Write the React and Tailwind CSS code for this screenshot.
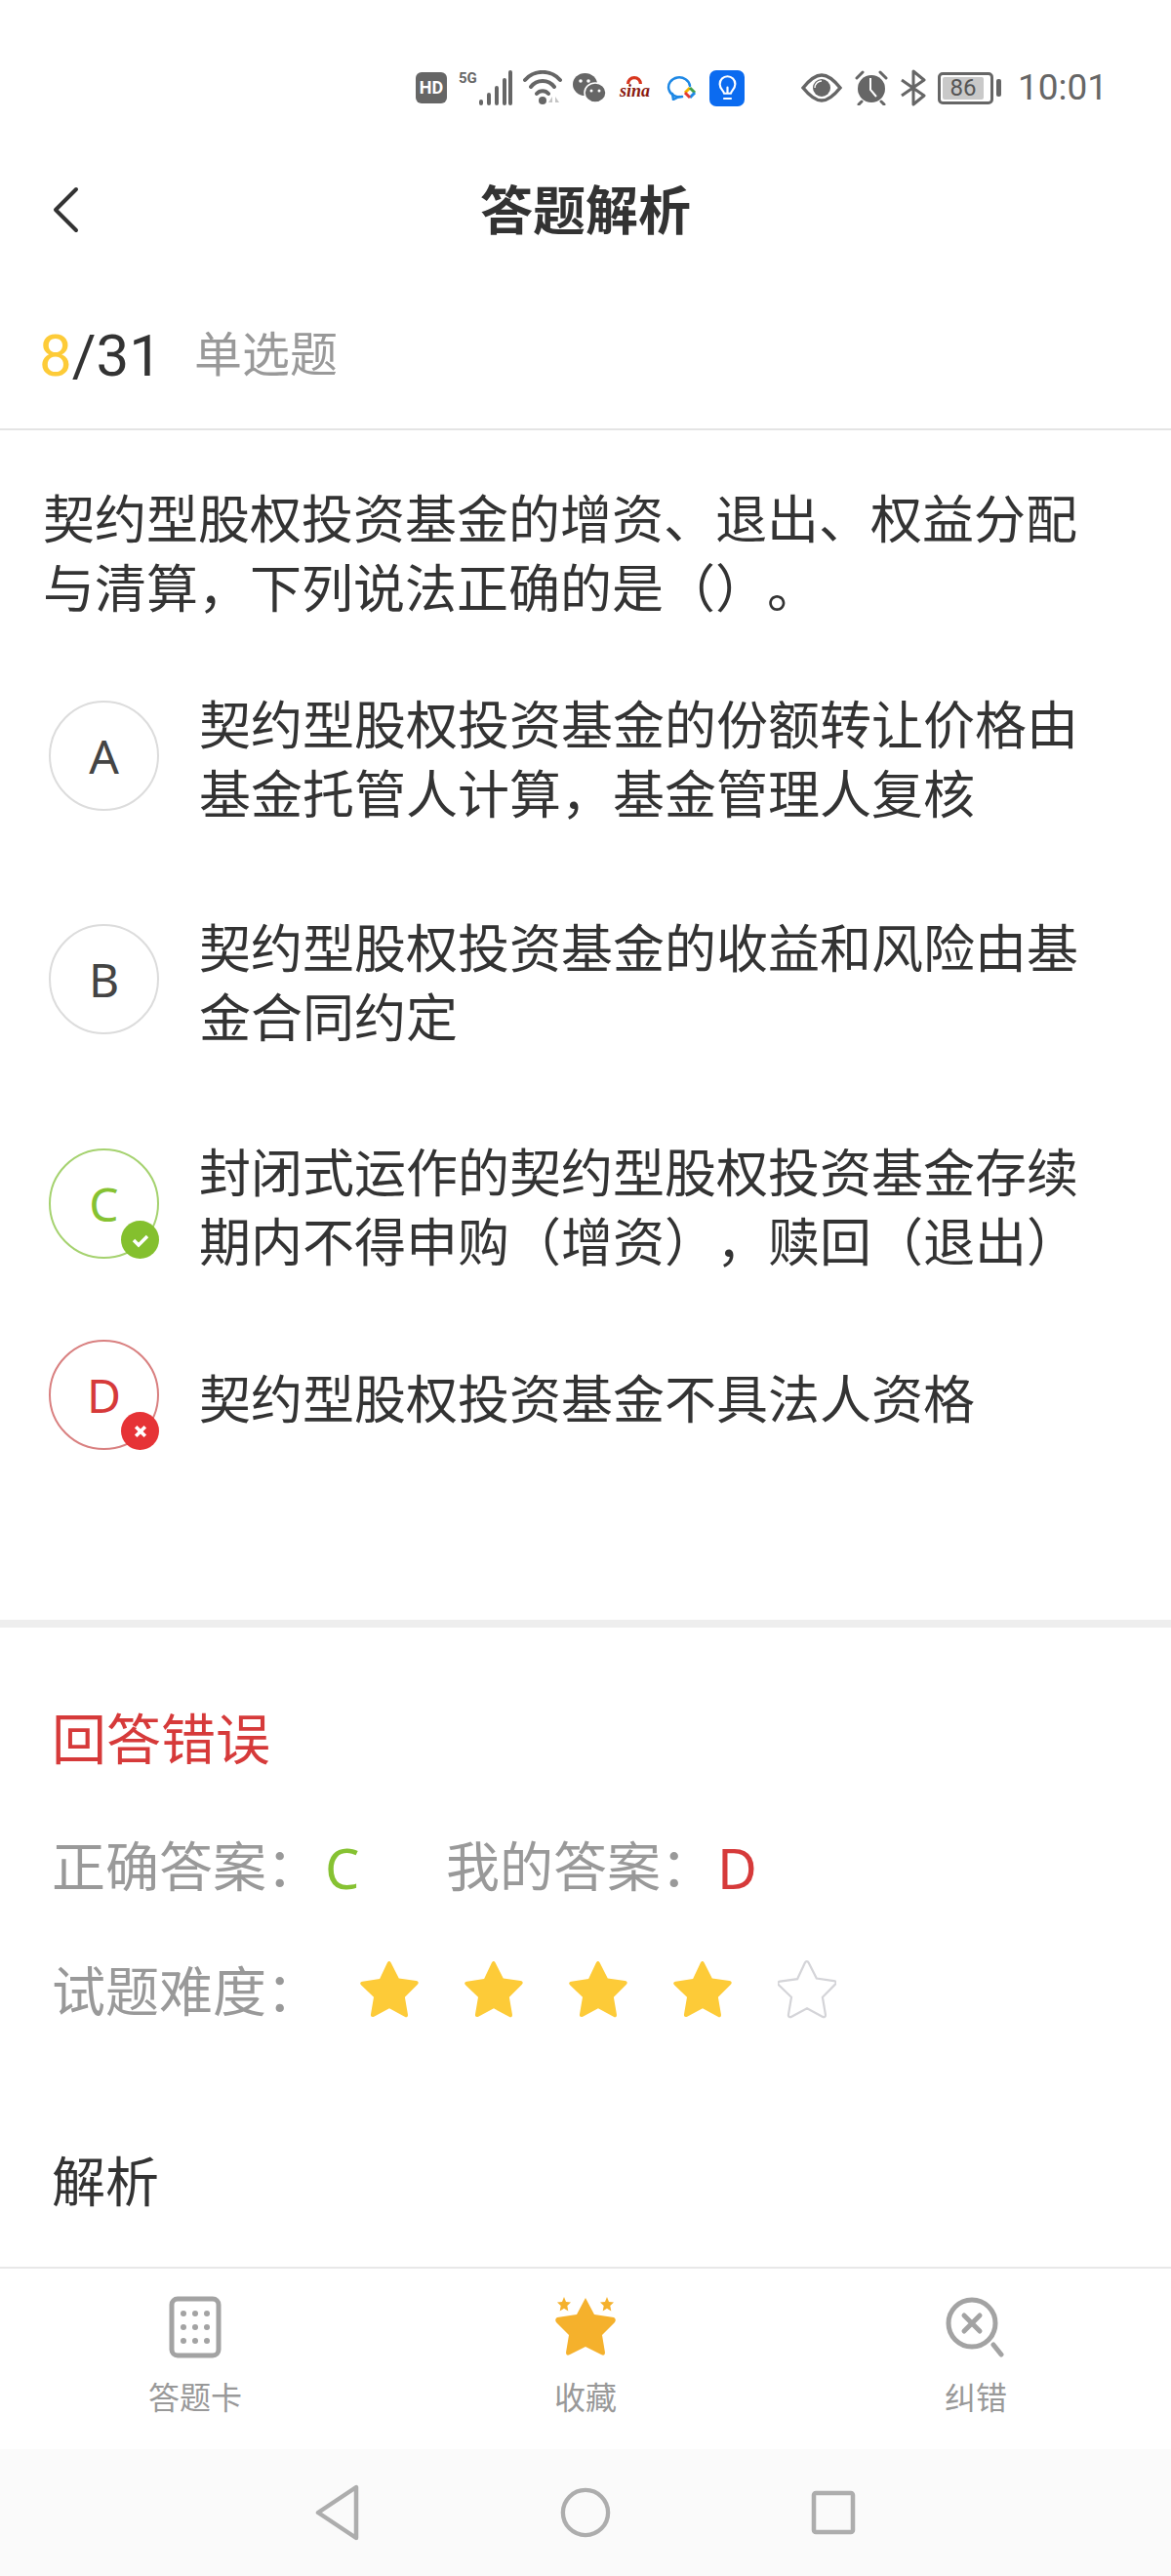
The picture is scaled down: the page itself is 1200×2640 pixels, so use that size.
const FONT = "font-['Roboto','Noto_Sans_CJK_SC',sans-serif]";

const options = [
  { key: "A", lines: ["契约型股权投资基金的份额转让价格由", "基金托管人计算，基金管理人复核"], pad: "pt-[56px] pb-[74px]" },
  { key: "B", lines: ["契约型股权投资基金的收益和风险由基", "金合同约定"], pad: "pb-[75px]" },
  { key: "C", lines: ["封闭式运作的契约型股权投资基金存续", "期内不得申购（增资），赎回（退出）"], state: "ok", pad: "pb-[62px]" },
  { key: "D", lines: ["契约型股权投资基金不具法人资格"], state: "bad", pad: "" },
];

function Star({ filled }) {
  const d = "M28 3.500c1-2 2.600-2 3.600 0l7.200 14.200 15.900 2.300c2.200.3 2.700 1.900 1.100 3.400L44.300 35l2.700 15.800c.4 2.200-1 3.200-2.900 2.100L30 45.400l-14.200 7.500c-1.900 1-3.300 0-2.900-2.100L15.600 35 4.100 23.900c-1.600-1.500-1.100-3.100 1.100-3.400l15.900-2.300z";
  return (
    <svg viewBox="3 1 54 54" className="w-[60px] h-[60px]">
      <path d={d} fill={filled ? "#fdcb38" : "#fff"} stroke={filled ? "none" : "#d4d4d8"} strokeWidth="2" />
    </svg>
  );
}

function StatusBar() {
  return (
    <div className="h-[154px] pt-[71px] pl-[426px]">
      <div className="flex items-center h-[38px] text-[#666]">
        <div className="w-[32px] h-[32px] rounded-[6px] bg-[#666] text-white text-[18px] font-bold leading-[32px] text-center">HD</div>
        <svg viewBox="0 0 55 36" className="w-[55px] h-[36px] ml-[12px]">
          <text x="0" y="13" fontSize="15" fontWeight="700" fill="#666">5G</text>
          <g fill="none" stroke="#666" strokeWidth="4" strokeLinecap="round">
            <path d="M23 32v2M31 25v9M39 18v16M47 10v24M53 2v32" />
          </g>
        </svg>
        <svg viewBox="0 0 40 36" className="w-[40px] h-[36px] ml-[11px]">
          <g fill="none" stroke="#666" strokeWidth="4" strokeLinecap="round">
            <path d="M2 10a24 24 0 0 1 36 0M8 17a15 15 0 0 1 24 0M14 24a8 8 0 0 1 12 0" />
          </g>
          <circle cx="20" cy="31" r="4" fill="#666" />
          <path d="M30 27l-4 6h4zM33 27l4 6h-4z" fill="#c4c4c4" />
        </svg>
        <svg viewBox="0 0 34 30" className="w-[34px] h-[30px] ml-[11px]">
          <ellipse cx="12.500" cy="11.500" rx="12.500" ry="11.500" fill="#666" />
          <ellipse cx="23" cy="20" rx="11" ry="10" fill="#666" stroke="#fff" strokeWidth="1.500" />
          <circle cx="8" cy="8" r="1.800" fill="#fff" />
          <circle cx="16" cy="8" r="1.800" fill="#fff" />
          <circle cx="19" cy="18" r="1.500" fill="#fff" />
          <circle cx="27" cy="18" r="1.500" fill="#fff" />
        </svg>
        <div className="relative w-[32px] h-[24px] ml-[14px]">
          <svg viewBox="0 0 20 12" className="absolute left-[7px] top-[-1px] w-[16px] h-[10px]">
            <path d="M2 11a8 8 0 0 1 16 0" fill="none" stroke="#d8361e" strokeWidth="4" />
          </svg>
          <span className="absolute left-0 top-[5px] text-[18px] leading-[20px] italic font-bold text-[#8a1a10] font-['Liberation_Serif',serif]">sina</span>
        </div>
        <svg viewBox="0 0 32 26" className="w-[32px] h-[26px] ml-[16px]">
          <path d="M16 22a11 10 0 1 1 8-11" fill="none" stroke="#1e88e5" strokeWidth="2.500" strokeLinecap="round" />
          <path d="M6 19l1 6 6-3" fill="none" stroke="#1e88e5" strokeWidth="2.500" strokeLinecap="round" />
          <path d="M19 18l5-5" stroke="#f4b400" strokeWidth="3" />
          <path d="M24 13l5 5" stroke="#43a047" strokeWidth="3" />
          <path d="M29 18l-5 5" stroke="#1e88e5" strokeWidth="3" />
          <path d="M24 23l-5-5" stroke="#e53935" strokeWidth="3" />
        </svg>
        <div className="w-[36px] h-[37px] ml-[12px] rounded-[7px] bg-[#0b6bf0] flex items-center justify-center">
          <svg viewBox="0 0 24 30" className="w-[21px] h-[27px]" fill="none" stroke="#fff" strokeWidth="2.500" strokeLinecap="round" strokeLinejoin="round">
            <path d="M8 21c0-3-5-5-5-11a9 9 0 0 1 18 0c0 6-5 8-5 11zM8 27h8M12 21v-7" />
          </svg>
        </div>
        <svg viewBox="0 0 42 30" className="w-[42px] h-[30px] ml-[58px]">
          <path d="M2 15C10 5 16 2 21 2s11 3 19 13c-8 10-14 13-19 13S10 25 2 15z" fill="none" stroke="#666" strokeWidth="3.500" />
          <circle cx="21" cy="15" r="9" fill="#666" />
          <path d="M14 15a7 7 0 0 1 7-7" fill="none" stroke="#fff" strokeWidth="1.500" />
        </svg>
        <svg viewBox="0 0 36 36" className="w-[36px] h-[36px] ml-[12px]">
          <circle cx="18" cy="19" r="14" fill="#666" />
          <path d="M17 8v12l6 7" fill="none" stroke="#fff" strokeWidth="2" />
          <path d="M3 8l6-6M33 8l-6-6M8 32l-3 3M28 32l3 3" stroke="#666" strokeWidth="3" strokeLinecap="round" />
        </svg>
        <svg viewBox="0 0 27 38" className="w-[27px] h-[38px] ml-[11px]">
          <path d="M2 11l23 16-11 9V2l11 9L2 27" fill="none" stroke="#666" strokeWidth="3" strokeLinejoin="round" />
        </svg>
        <div className="flex items-center ml-[12px]">
          <div className="w-[57px] h-[33px] rounded-[5px] border-[3px] border-[#666] p-[2px]">
            <div className="w-[42px] h-full rounded-[2px] bg-[#c9c9c9] text-[#555] text-[24px] leading-[23px] text-center">86</div>
          </div>
          <div className="w-[5px] h-[18px] ml-[3px] rounded-[2px] bg-[#666]" />
        </div>
        <div className="ml-[17px] text-[37px] leading-[38px] text-[#666]">10:01</div>
      </div>
    </div>
  );
}

function Option({ item }) {
  const color = item.state === "ok" ? "border-[#a5d26f] text-[#86c232]" : item.state === "bad" ? "border-[#d98080] text-[#d63a3a]" : "border-[#dcdcdc] text-[#444]";
  return (
    <div className={`flex items-center ml-[50px] ${item.pad}`}>
      <div className={`relative shrink-0 w-[113px] h-[113px] rounded-full border-2 flex items-center justify-center text-[48px] font-['Noto_Sans',sans-serif] ${color}`}>
        {item.key}
        {item.state === "ok" && (
          <div className="absolute right-[-2px] bottom-[-2px] w-[39px] h-[39px] rounded-full bg-[#84c02e] flex items-center justify-center">
            <svg viewBox="0 0 20 20" className="w-[20px] h-[20px]" fill="none" stroke="#fff" strokeWidth="3.500"><path d="M3 10l5 5 9-9" /></svg>
          </div>
        )}
        {item.state === "bad" && (
          <div className="absolute right-[-2px] bottom-[-2px] w-[39px] h-[39px] rounded-full bg-[#e63336] flex items-center justify-center">
            <svg viewBox="0 0 20 20" className="w-[16px] h-[16px]" fill="none" stroke="#fff" strokeWidth="4.500"><path d="M4 4l12 12M16 4L4 16" /></svg>
          </div>
        )}
      </div>
      <div className="ml-[41px] pt-[13px] text-[53px] leading-[71px] text-[#333] whitespace-nowrap">
        {item.lines.map((l) => (
          <div key={l}>{l}</div>
        ))}
      </div>
    </div>
  );
}

export default function App() {
  return (
    <div className={`w-[1200px] h-[2640px] bg-white flex flex-col [text-spacing-trim:space-all] ${FONT}`}>
      <StatusBar />
      <div className="relative h-[127px] flex items-center justify-center">
        <svg viewBox="0 0 30 50" className="absolute left-[52px] top-[36px] w-[30px] h-[50px]" fill="none" stroke="#333" strokeWidth="4" strokeLinecap="round" strokeLinejoin="round">
          <path d="M26 4L5 25l21 21" />
        </svg>
        <div className="text-[54px] font-bold text-[#333] leading-none">答题解析</div>
      </div>
      <div className="h-[160px] pt-[10px] pl-[40px] flex items-center border-b-2 border-[#e4e4e4]">
        <span className="text-[60px] text-[#fdcb38]">8</span>
        <span className="text-[60px] text-[#333]">/31</span>
        <span className="ml-[33px] text-[49px] text-[#999]">单选题</span>
      </div>
      <div className="pt-[58px] pl-[44px] text-[53px] leading-[71px] text-[#333] whitespace-nowrap">
        <div>契约型股权投资基金的增资、退出、权益分配</div>
        <div>与清算，下列说法正确的是（）。</div>
      </div>
      <div>
        {options.map((o) => (
          <Option key={o.key} item={o} />
        ))}
      </div>
      <div className="mt-[174px] h-[8px] bg-[#eeeeee]" />
      <div className="flex-1 pl-[53px]">
        <div className="pt-[84px] text-[56px] leading-[64px] text-[#d63a3a]">回答错误</div>
        <div className="mt-[66px] flex items-center text-[55px] leading-[64px] text-[#999]">
          <span>正确答案：</span>
          <span className="ml-[5px] w-[38px] text-[56px] font-['Noto_Sans',sans-serif] text-[#86c232]">C</span>
          <span className="ml-[86px]">我的答案：</span>
          <span className="ml-[3px] text-[56px] font-['Noto_Sans',sans-serif] text-[#d63a3a]">D</span>
        </div>
        <div className="mt-[64px] flex items-center h-[64px] text-[55px] text-[#999]">
          <span>试题难度：</span>
          <div className="ml-[41px] mb-[6px] flex gap-[47px]">
            <Star filled />
            <Star filled />
            <Star filled />
            <Star filled />
            <Star />
          </div>
        </div>
        <div className="mt-[131px] text-[55px] leading-[64px] text-[#333]">解析</div>
      </div>
      <div className="h-[187px] border-t-2 border-[#e8e8e8] flex pt-[28px] text-[#999] text-[32px]">
        <div className="w-[400px] flex flex-col items-center">
          <svg viewBox="0 0 54 64" className="w-[54px] h-[64px]">
            <rect x="3" y="3" width="48" height="58" rx="6" fill="none" stroke="#a3a3a3" strokeWidth="5" />
            <g fill="#a3a3a3">
              <circle cx="15" cy="18" r="3" /><circle cx="27" cy="18" r="3" /><circle cx="39" cy="18" r="3" />
              <circle cx="15" cy="32" r="3" /><circle cx="27" cy="32" r="3" /><circle cx="39" cy="32" r="3" />
              <circle cx="15" cy="46" r="3" /><circle cx="27" cy="46" r="3" /><circle cx="39" cy="46" r="3" />
            </g>
          </svg>
          <div className="mt-[21px] leading-[40px]">答题卡</div>
        </div>
        <div className="w-[400px] flex flex-col items-center">
          <svg viewBox="0 0 64 64" className="w-[64px] h-[64px]">
            <path fill="#f5b12c" d="M32 2L41 19L61 22Q64 24 62 27L49 40L52 58Q52 62 48 60L32 52L16 60Q12 62 12 58L15 40L2 27Q0 24 3 22L23 19Z" />
            <path fill="#f5b12c" d="M10 1l2 5 5 .6-3.700 3.400 1 5.500-4.300-2.800-4.300 2.800 1-5.500L3 6.600 8 6zM54 1l2 5 5 .6-3.700 3.400 1 5.500-4.300-2.800-4.300 2.800 1-5.500L47 6.600 52 6z" />
          </svg>
          <div className="mt-[21px] leading-[40px]">收藏</div>
        </div>
        <div className="w-[400px] flex flex-col items-center">
          <svg viewBox="0 0 64 64" className="w-[64px] h-[64px]">
            <circle cx="28" cy="28" r="24" fill="none" stroke="#a3a3a3" strokeWidth="5" />
            <path d="M20 20l16 16M36 20L20 36" stroke="#a3a3a3" strokeWidth="5" strokeLinecap="round" />
            <path d="M50 50l8 10" stroke="#a3a3a3" strokeWidth="5" strokeLinecap="round" />
          </svg>
          <div className="mt-[21px] leading-[40px]">纠错</div>
        </div>
      </div>
      <div className="h-[130px] bg-[#fafafa] grid grid-cols-[254px_254px_254px] justify-center items-center justify-items-center">
        <svg viewBox="0 0 48 58" className="w-[48px] h-[58px]" fill="none" stroke="#adadad" strokeWidth="4.500" strokeLinejoin="round">
          <path d="M43 3v52L4 29z" />
        </svg>
        <svg viewBox="0 0 54 54" className="w-[52px] h-[52px]" fill="none" stroke="#adadad" strokeWidth="4.500">
          <circle cx="27" cy="27" r="24" />
        </svg>
        <svg viewBox="0 0 46 46" className="w-[46px] h-[46px]" fill="none" stroke="#adadad" strokeWidth="4.500" strokeLinejoin="round">
          <rect x="3" y="3" width="40" height="40" rx="2" />
        </svg>
      </div>
    </div>
  );
}
